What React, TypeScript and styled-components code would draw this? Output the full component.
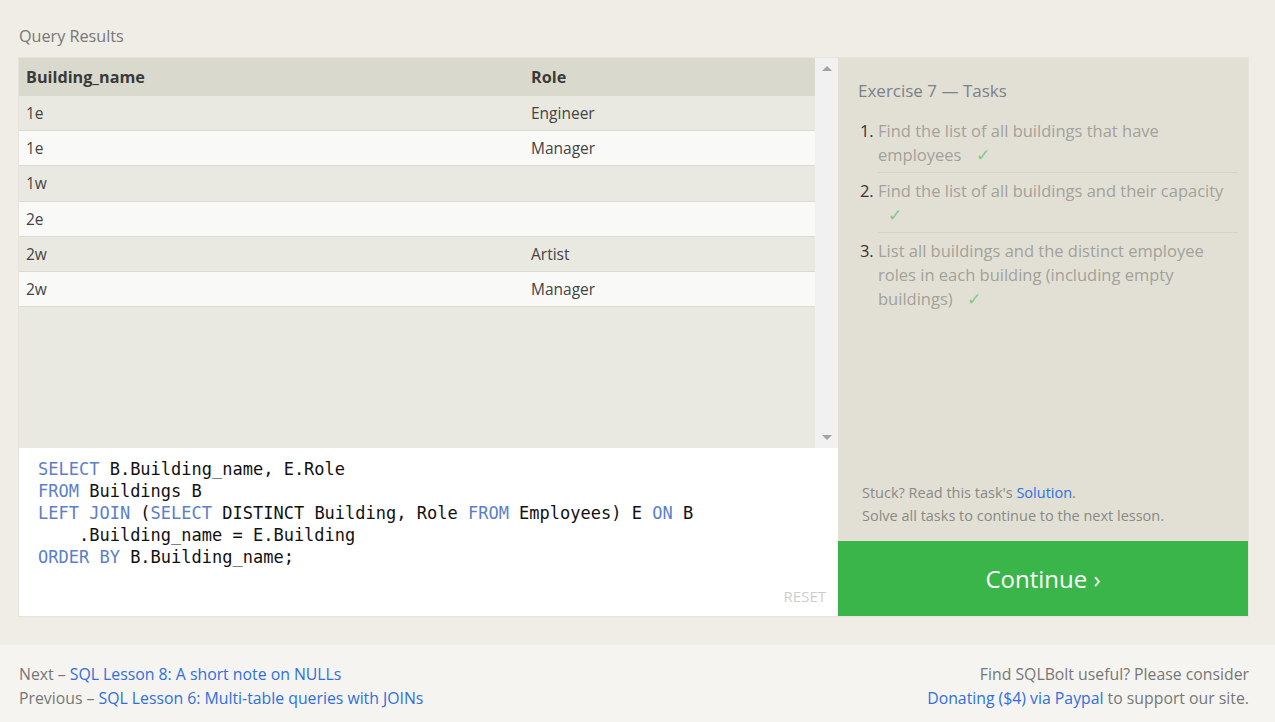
import React from "react";
import styled, { createGlobalStyle } from "styled-components";

const Global = createGlobalStyle`
  html, body { margin: 0; padding: 0; }
  body {
    background: #efede6;
    font-family: "Open Sans", "Noto Sans", sans-serif;
    color: #444;
  }
`;

const Page = styled.div`
  width: 1275px;
  height: 722px;
  display: flex;
  flex-direction: column;
  overflow: hidden;
`;

const Main = styled.main`
  padding: 26px 27px 29px 19px;
`;

const SectionTitle = styled.div`
  font-size: 16.2px;
  line-height: 20px;
  color: #777;
  margin-bottom: 12px;
`;

const Workspace = styled.div`
  display: grid;
  grid-template-columns: 819px 410px;
  grid-template-rows: 390px 168px;
  box-shadow: 0 0 0 1px #e6e4dc;
`;

const ResultsPane = styled.div`
  display: flex;
  background: #eae9e1;
`;

const TableWrap = styled.div`
  flex: 1;
`;

const Table = styled.table`
  width: 100%;
  border-collapse: collapse;
  font-size: 15.5px;
`;

const HeadCell = styled.th<{ $w?: number }>`
  text-align: left;
  font-weight: 700;
  font-size: 16.2px;
  background: #dad9cd;
  color: #3a3a3a;
  height: 38px;
  padding: 0 7px;
  width: ${(p) => (p.$w ? `${p.$w}px` : "auto")};
  box-sizing: border-box;
`;

const Row = styled.tr<{ $alt: boolean }>`
  background: ${(p) => (p.$alt ? "#f9f9f8" : "#eae9e1")};
  border-bottom: 1px solid #dcdbd3;
`;

const Cell = styled.td`
  height: 34.2px;
  padding: 0 7px;
  color: #444;
`;

const Scrollbar = styled.div`
  width: 23px;
  background: #f1f1f1;
  display: flex;
  flex-direction: column;
  justify-content: space-between;
  align-items: center;
  padding: 8px 0 8px;
  box-sizing: border-box;
`;

const Arrow = styled.div<{ $down?: boolean }>`
  width: 0;
  height: 0;
  border-left: 5px solid transparent;
  border-right: 5px solid transparent;
  ${(p) =>
    p.$down
      ? "border-top: 5px solid #a3a3a3;"
      : "border-bottom: 5px solid #a3a3a3;"}
`;

const TaskPane = styled.div`
  grid-row: 1 / span 2;
  grid-column: 2;
  display: flex;
  flex-direction: column;
`;

const TaskBody = styled.div`
  flex: 1;
  background: #e2e0d5;
  padding: 20px 10px 14px 20px;
  display: flex;
  flex-direction: column;
`;

const TaskTitle = styled.div`
  font-size: 17px;
  color: #7b8089;
  line-height: 26px;
  margin-bottom: 9px;
`;

const TaskList = styled.ol`
  margin: 0;
  padding: 0 0 0 20px;
  flex: 1;
`;

const Task = styled.li<{ $last?: boolean }>`
  font-size: 16.5px;
  line-height: 24px;
  color: #a2a19b;
  padding: 6px 0 5px;
  border-bottom: ${(p) => (p.$last ? "none" : "1px solid #d6d4ca")};
  &::marker {
    color: #333;
  }
`;

const Check = styled.span`
  color: #7dca8c;
  margin-left: 10px;
`;

const Hint = styled.div`
  font-size: 14.5px;
  line-height: 23px;
  color: #8a8985;
  padding-left: 4px;
`;

const Link = styled.a`
  color: #2f6fe0;
  text-decoration: none;
`;

const ContinueButton = styled.button`
  height: 75px;
  border: none;
  background: #3ab54a;
  color: #fff;
  font-family: "Open Sans", "Noto Sans", sans-serif;
  font-size: 24px;
  cursor: pointer;
`;

const Editor = styled.div`
  background: #fff;
  position: relative;
  padding: 10px 19px;
  font-family: "DejaVu Sans Mono", monospace;
  font-size: 17px;
  line-height: 22px;
  color: #111;
  white-space: pre;
`;

const Kw = styled.span`
  color: #5b80c9;
`;

const Reset = styled.div`
  position: absolute;
  right: 12px;
  bottom: 9px;
  font-family: "Open Sans", sans-serif;
  font-size: 15px;
  color: #cdcdcd;
`;

const Footer = styled.footer`
  flex: 1;
  background: #f5f4f0;
  padding: 17px 26px 0 19px;
  display: flex;
  justify-content: space-between;
  font-size: 15.8px;
  line-height: 24px;
  color: #777;
`;

const FooterCol = styled.div<{ $right?: boolean }>`
  text-align: ${(p) => (p.$right ? "right" : "left")};
`;

const rows: [string, string][] = [
  ["1e", "Engineer"],
  ["1e", "Manager"],
  ["1w", ""],
  ["2e", ""],
  ["2w", "Artist"],
  ["2w", "Manager"],
];

const tasks = [
  "Find the list of all buildings that have employees",
  "Find the list of all buildings and their capacity",
  "List all buildings and the distinct employee roles in each building (including empty buildings)",
];

export default function App() {
  return (
    <Page>
      <Global />
      <Main>
        <SectionTitle>Query Results</SectionTitle>
        <Workspace>
          <ResultsPane>
            <TableWrap>
              <Table>
                <thead>
                  <tr>
                    <HeadCell $w={505}>Building_name</HeadCell>
                    <HeadCell>Role</HeadCell>
                  </tr>
                </thead>
                <tbody>
                  {rows.map((r, i) => (
                    <Row key={i} $alt={i % 2 === 1}>
                      <Cell>{r[0]}</Cell>
                      <Cell>{r[1]}</Cell>
                    </Row>
                  ))}
                </tbody>
              </Table>
            </TableWrap>
            <Scrollbar>
              <Arrow />
              <Arrow $down />
            </Scrollbar>
          </ResultsPane>
          <TaskPane>
            <TaskBody>
              <TaskTitle>Exercise 7 — Tasks</TaskTitle>
              <TaskList>
                {tasks.map((t, i) => (
                  <Task key={i} $last={i === tasks.length - 1}>
                    {t} <Check>✓</Check>
                  </Task>
                ))}
              </TaskList>
              <Hint>
                Stuck? Read this task's <Link href="#">Solution</Link>.
                <br />
                Solve all tasks to continue to the next lesson.
              </Hint>
            </TaskBody>
            <ContinueButton>Continue ›</ContinueButton>
          </TaskPane>
          <Editor>
            <Kw>SELECT</Kw> B.Building_name, E.Role{"\n"}
            <Kw>FROM</Kw> Buildings B{"\n"}
            <Kw>LEFT JOIN</Kw> (<Kw>SELECT</Kw> DISTINCT Building, Role{" "}
            <Kw>FROM</Kw> Employees) E <Kw>ON</Kw> B{"\n"}
            {"    "}.Building_name = E.Building{"\n"}
            <Kw>ORDER BY</Kw> B.Building_name;
            <Reset>RESET</Reset>
          </Editor>
        </Workspace>
      </Main>
      <Footer>
        <FooterCol>
          Next – <Link href="#">SQL Lesson 8: A short note on NULLs</Link>
          <br />
          Previous –{" "}
          <Link href="#">SQL Lesson 6: Multi-table queries with JOINs</Link>
        </FooterCol>
        <FooterCol $right>
          Find SQLBolt useful? Please consider
          <br />
          <Link href="#">Donating ($4) via Paypal</Link> to support our site.
        </FooterCol>
      </Footer>
    </Page>
  );
}
